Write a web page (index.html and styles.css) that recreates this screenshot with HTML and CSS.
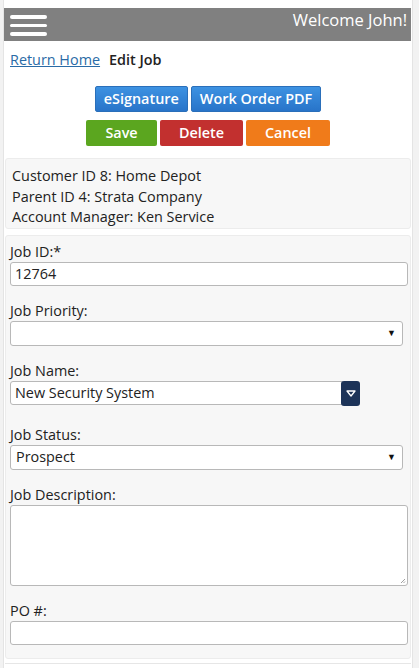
FILE: index.html
```html
<!DOCTYPE html>
<html>
<head>
<meta charset="utf-8">
<link rel="stylesheet" href="styles.css">
</head>
<body>
<div class="page">
  <div class="header">
    <div class="burger"><span></span><span></span><span></span></div>
    <div class="welcome">Welcome John!</div>
  </div>
  <div class="crumbs"><a href="#" class="home">Return Home</a><span class="current">Edit Job</span></div>
  <div class="btnrow">
    <button class="btn blue">eSignature</button>
    <button class="btn blue">Work Order PDF</button>
  </div>
  <div class="btnrow">
    <button class="btn green">Save</button>
    <button class="btn red">Delete</button>
    <button class="btn orange">Cancel</button>
  </div>
  <div class="info">
    <div>Customer ID 8: Home Depot</div>
    <div>Parent ID 4: Strata Company</div>
    <div>Account Manager: Ken Service</div>
  </div>
  <div class="form">
    <div class="field">
      <label>Job ID:*</label>
      <div class="input">12764</div>
    </div>
    <div class="field">
      <label>Job Priority:</label>
      <div class="input select"><span></span><span class="caret">&#9660;</span></div>
    </div>
    <div class="field combo-field">
      <label>Job Name:</label>
      <div class="combo">
        <div class="input combo-in">New Security System</div>
        <div class="combo-btn"><svg width="10" height="7" viewBox="0 0 10 7"><path d="M1 1 L9 1 L5 6 Z" fill="none" stroke="#fff" stroke-width="1.3" stroke-linejoin="round"/></svg></div>
      </div>
    </div>
    <div class="field">
      <label>Job Status:</label>
      <div class="input select"><span>Prospect</span><span class="caret">&#9660;</span></div>
    </div>
    <div class="field">
      <label>Job Description:</label>
      <div class="input textarea"><svg class="grip" width="6" height="6" viewBox="0 0 6 6"><path d="M5 1 L1 5 M5 3.5 L3.5 5" stroke="#888" stroke-width="0.8"/></svg></div>
    </div>
    <div class="field last">
      <label>PO #:</label>
      <div class="input"></div>
    </div>
  </div>
  <div class="bottomline"></div>
</div>
</body>
</html>
```
FILE: styles.css
```css
html, body {
  margin: 0;
  padding: 0;
  background: #f2f2f2;
}
body {
  font-family: "Open Sans", "Noto Sans", sans-serif;
  font-size: 14.4px;
  color: #333;
  height: 668px;
  overflow: hidden;
}
.page {
  margin: 0 6px 0 3px;
  background: #fff;
  border-left: 1px solid #e4e4e4;
  border-right: 1px solid #e4e4e4;
  padding: 8px 0 0 0;
  height: 660px;
}
.header {
  height: 33px;
  margin-right: 1px;
  background: #808080;
  display: flex;
  justify-content: space-between;
  align-items: flex-start;
}
.burger {
  display: flex;
  flex-direction: column;
  gap: 5px;
  padding: 7px 0 0 6px;
}
.burger span {
  display: block;
  width: 37px;
  height: 3.5px;
  border-radius: 2px;
  background: #fff;
}
.welcome {
  color: #fff;
  font-size: 16.5px;
  line-height: 22px;
  padding: 1px 4px 0 0;
}
.crumbs {
  padding: 8px 0 0 6px;
  height: 22px;
  line-height: 22px;
}
.home {
  color: #2a6ba6;
  text-decoration: underline;
  margin-right: 9px;
}
.current {
  font-weight: 600;
  color: #222;
}
.btnrow {
  display: flex;
  justify-content: center;
  gap: 3px;
  margin-top: 15px;
}
.btnrow + .btnrow {
  margin-top: 8px;
}
.btn {
  font-family: "Open Sans", "Noto Sans", sans-serif;
  font-size: 14.4px;
  font-weight: 600;
  color: #fff;
  height: 26px;
  box-sizing: border-box;
  border: none;
  border-radius: 2px;
  padding: 0 8px;
  line-height: 24px;
}
.blue {
  background: linear-gradient(#3d92e2, #2874c9);
  border: 1px solid #2a6fba;
}
.green {
  background: #5ba61f;
  width: 71px;
}
.red {
  background: #c2302f;
  width: 83px;
}
.orange {
  background: #f07b1a;
  width: 84px;
}
.info {
  margin: 12px 1px 0 1px;
  background: #f7f7f7;
  border: 1px solid #ececec;
  border-radius: 3px;
  padding: 7px 7px 0 6px;
  line-height: 20.5px;
  color: #222;
}
.form {
  margin: 6px 1px 0 1px;
  background: #f7f7f7;
  border: 1px solid #ececec;
  border-radius: 3px;
  padding: 6px 2px 13px 4px;
}
.field label {
  display: block;
  line-height: 20px;
  color: #222;
}
.field {
  margin-bottom: 15px;
}
.field.combo-field {
  margin-bottom: 19px;
}
.field.last {
  margin-bottom: 0;
}
.input {
  height: 24px;
  box-sizing: border-box;
  background: #fff;
  border: 1px solid #b8b8b8;
  border-radius: 3px;
  padding: 0 4px;
  line-height: 22px;
  color: #222;
}
.select {
  height: 25px;
  display: flex;
  justify-content: space-between;
  padding: 0 6px 0 5px;
  margin-right: 5px;
}
.caret {
  font-size: 9px;
  color: #111;
}
.combo {
  display: flex;
  align-items: flex-start;
}
.combo-in {
  width: 333px;
  border-radius: 3px 0 0 3px;
}
.combo-btn {
  width: 19px;
  height: 25px;
  margin-left: -2px;
  background: #1c3358;
  border-radius: 3px;
  display: flex;
  align-items: center;
  justify-content: center;
}
.textarea {
  height: 81px;
  position: relative;
}
.grip {
  position: absolute;
  right: 1px;
  bottom: 1px;
}
.bottomline {
  margin: 4px 1px 0 1px;
  border-top: 1px solid #e6e6e6;
}
```
